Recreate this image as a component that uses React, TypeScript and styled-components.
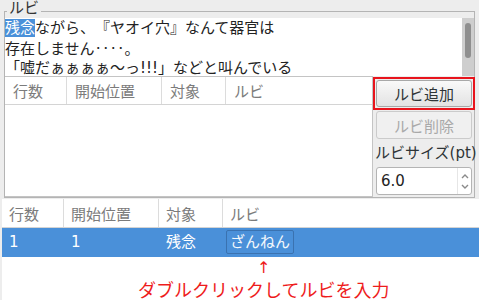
import React from "react";
import styled, { createGlobalStyle } from "styled-components";

const GlobalStyle = createGlobalStyle`
  html, body {
    margin: 0;
    padding: 0;
  }

  body {
    background: #ededed;
    font-family: "DejaVu Sans", "Noto Sans CJK JP", sans-serif;
    font-size: 15px;
    color: #2e3436;
    text-spacing-trim: space-all;
  }
`;

const Window = styled.div`
  width: 479px;
  height: 300px;
  display: flex;
  flex-direction: column;
  overflow: hidden;
`;

const Group = styled.fieldset`
  margin: 0 4px;
  padding: 0;
  border: 1px solid #b4b4b4;
  min-width: 0;
`;

const Legend = styled.legend`
  margin-left: 2px;
  padding: 0 2px 6px;
  line-height: 16px;
  color: #333;
`;

const TextBox = styled.div`
  display: flex;
  height: 58px;
  margin-top: -4px;
  background: #fff;
`;

const TextContent = styled.div`
  flex: 1;
  padding-top: 1px;
  line-height: 19px;
  color: #222;
  white-space: nowrap;
  overflow: hidden;
`;

const Selected = styled.span`
  background: #4a90d9;
  color: #fff;
`;

const Leader = styled.span`
  font-family: "Noto Sans CJK JP", sans-serif;
`;

const ScrollTrack = styled.div`
  width: 12px;
  padding-top: 5px;
  background: #cecece;
  display: flex;
  justify-content: center;
`;

const ScrollThumb = styled.div`
  width: 6px;
  height: 35px;
  border-radius: 3px;
  background: #8f8f8f;
`;

const MiddleRow = styled.div`
  display: flex;
  height: 121px;
`;

const TopTable = styled.div`
  flex: 0 0 368px;
  box-sizing: border-box;
  background: #fff;
  border: 1px solid #c4c4c4;
  border-left: none;
`;

const HeaderRow = styled.div<{ $height: number }>`
  display: grid;
  grid-template-columns: 62px 95px 64px 1fr;
  height: ${({ $height }) => $height}px;
  border-bottom: 1px solid #d4d4d4;
  background: #fff;
`;

const HeaderCell = styled.div<{ $pad: number }>`
  padding-left: ${({ $pad }) => $pad}px;
  display: flex;
  align-items: center;
  color: #7b7b7b;
  border-right: 1px solid #dcdcdc;

  &:last-child {
    border-right: none;
  }
`;

const SidePanel = styled.div`
  flex: 1;
  min-width: 0;
  display: flex;
  flex-direction: column;
  padding-top: 1px;
`;

const Marker = styled.div`
  align-self: flex-start;
  padding: 1px;
  border: 2px solid #e8141c;
`;

const Button = styled.button`
  display: block;
  width: 96px;
  height: 27px;
  margin: 0;
  padding: 0;
  font: inherit;
  color: #2e3436;
  background: linear-gradient(#f9f9f9, #e3e3e3);
  border: 1px solid #a8a8a8;
  border-radius: 3px;

  &:disabled {
    height: 28px;
    margin: 1px 0 0 3px;
    color: #a9a9a9;
    background: #f0f0f0;
    border-color: #cbcbcb;
  }
`;

const SizeLabel = styled.div`
  margin: 3px 0 0 2px;
  line-height: 22px;
  white-space: nowrap;
  color: #2e3436;
`;

const Spinner = styled.div`
  margin: 3px 0 0 3px;
  width: 96px;
  height: 28px;
  box-sizing: border-box;
  display: flex;
  background: #fff;
  border: 1px solid #b4b4b4;
  border-radius: 3px;
`;

const SpinValue = styled.div`
  flex: 1;
  padding-left: 4px;
  line-height: 26px;
  color: #222;
`;

const SpinArrows = styled.div`
  width: 13px;
  display: flex;
  flex-direction: column;
  justify-content: space-around;
  align-items: center;
  border-left: 1px solid #e6e6e6;
  padding: 2px 0;
`;

const LowerSection = styled.div`
  flex: 1;
  margin: 1px 0 0 2px;
  background: #fff;
  display: flex;
  flex-direction: column;
`;

const DataRow = styled.div<{ $selected?: boolean }>`
  display: grid;
  grid-template-columns: 62px 95px 64px 1fr;
  height: 29px;
  background: ${({ $selected }) => ($selected ? "#4a90d9" : "#fff")};
  color: ${({ $selected }) => ($selected ? "#fff" : "#222")};
`;

const DataCell = styled.div`
  padding-left: 7px;
  line-height: 29px;
`;

const EditorCell = styled.div`
  padding: 2px 0 0 3px;
`;

const Editor = styled.span`
  display: inline-block;
  height: 24px;
  box-sizing: border-box;
  padding: 0 3px;
  line-height: 22px;
  border: 1px solid #3a72b0;
  border-radius: 2px;
  color: #f4f8fc;
`;

const Hint = styled.div`
  align-self: flex-start;
  margin-left: 136px;
  display: flex;
  flex-direction: column;
  align-items: center;
  color: #ee1c1c;
`;

const HintArrow = styled.div`
  margin-top: 3px;
  font-size: 16px;
  line-height: 16px;
`;

const HintText = styled.div`
  margin-top: 4px;
  font-size: 18px;
  line-height: 22px;
  white-space: nowrap;
`;

const Chevron = ({ up }: { up?: boolean }) => (
  <svg width="8" height="6" viewBox="0 0 8 6">
    <path
      d={up ? "M1 5 L4 2 L7 5" : "M1 1 L4 4 L7 1"}
      fill="none"
      stroke="#8a8a8a"
      strokeWidth="1.4"
    />
  </svg>
);

const columns = ["行数", "開始位置", "対象", "ルビ"];

export default function App() {
  return (
    <Window>
      <GlobalStyle />
      <Group>
        <Legend>ルビ</Legend>
        <TextBox>
          <TextContent>
            <div>
              <Selected>残念</Selected>ながら、『ヤオイ穴』なんて器官は
            </div>
            <div>
              存在しません<Leader>‥‥</Leader>。
            </div>
            <div>「嘘だぁぁぁぁ〜っ!!!」などと叫んでいる</div>
          </TextContent>
          <ScrollTrack>
            <ScrollThumb />
          </ScrollTrack>
        </TextBox>
        <MiddleRow>
          <TopTable>
            <HeaderRow $height={27}>
              {columns.map((c) => (
                <HeaderCell key={c} $pad={8}>
                  {c}
                </HeaderCell>
              ))}
            </HeaderRow>
          </TopTable>
          <SidePanel>
            <Marker>
              <Button>ルビ追加</Button>
            </Marker>
            <Button disabled>ルビ削除</Button>
            <SizeLabel>ルビサイズ(pt)</SizeLabel>
            <Spinner>
              <SpinValue>6.0</SpinValue>
              <SpinArrows>
                <Chevron up />
                <Chevron />
              </SpinArrows>
            </Spinner>
          </SidePanel>
        </MiddleRow>
      </Group>
      <LowerSection>
        <HeaderRow $height={28}>
          {columns.map((c) => (
            <HeaderCell key={c} $pad={7}>
              {c}
            </HeaderCell>
          ))}
        </HeaderRow>
        <DataRow $selected>
          <DataCell>1</DataCell>
          <DataCell>1</DataCell>
          <DataCell>残念</DataCell>
          <EditorCell>
            <Editor>ざんねん</Editor>
          </EditorCell>
        </DataRow>
        <Hint>
          <HintArrow>↑</HintArrow>
          <HintText>ダブルクリックしてルビを入力</HintText>
        </Hint>
      </LowerSection>
    </Window>
  );
}
